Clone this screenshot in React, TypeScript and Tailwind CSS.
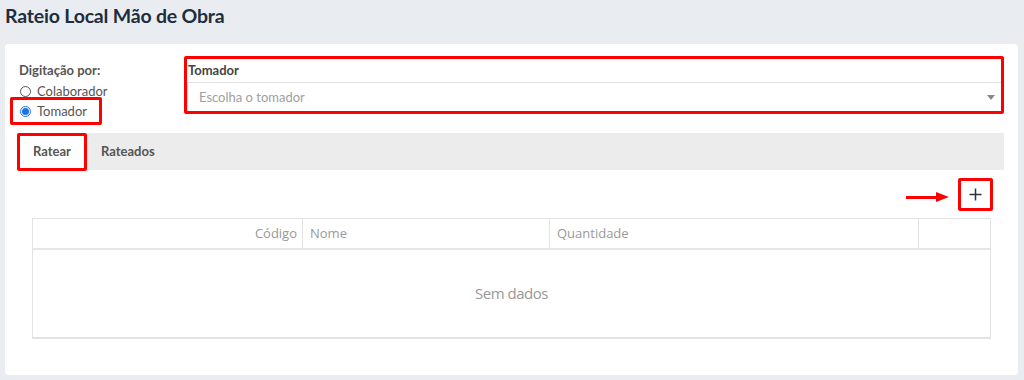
function Radio({ checked, label }: { checked?: boolean; label: string }) {
  return (
    <label className="flex items-center gap-[6px] text-[13px] leading-[16px] text-[#555]">
      {checked ? (
        <span className="w-[11px] h-[11px] rounded-full border border-[#1a73e8] flex items-center justify-center">
          <span className="w-[7px] h-[7px] rounded-full bg-[#1a73e8]" />
        </span>
      ) : (
        <span className="w-[11px] h-[11px] rounded-full border border-[#555] bg-white" />
      )}
      {label}
    </label>
  );
}

function App() {
  return (
    <div className="w-[1024px] h-[380px] bg-[#e9edf2] overflow-hidden font-['Lato','Open_Sans',sans-serif]">
      <h1 className="pl-[5px] pt-[2px] h-[44px] text-[19.5px] leading-[28px] font-bold text-[#1f2d3d] tracking-[-0.2px]">
        Rateio Local Mão de Obra
      </h1>

      <div className="ml-[5px] w-[1013px] h-[331px] bg-white rounded-[4px] pl-[12px] pr-[14px] pt-[12px]">
        <div className="flex">
          <div className="w-[167px] pt-[5px]">
            <div className="pl-[2px] text-[13px] leading-[18px] font-bold text-[#555]">Digitação por:</div>
            <div className="pl-[3px] mt-[4px]">
              <Radio label="Colaborador" />
            </div>
            <div className="-ml-[7px] -mt-[2px] w-[92px] h-[28px] border-[3px] border-[#ff0000] rounded-[2px] pl-[7px] flex items-center">
              <Radio checked label="Tomador" />
            </div>
          </div>

          <div className="flex-1 h-[58px] border-[3px] border-[#ff0000] rounded-[2px] flex flex-col">
            <div className="pl-[1px] pt-[2px] h-[23px] text-[13px] leading-[18px] font-bold text-[#444]">Tomador</div>
            <div className="flex-1 border-t border-l border-[#e2e2e2] flex items-center justify-between pl-[11px] pr-[6px]">
              <span className="text-[13px] text-[#a0a0a0] pt-[1px]">Escolha o tomador</span>
              <span className="w-0 h-0 border-l-[4px] border-r-[4px] border-t-[5px] border-l-transparent border-r-transparent border-t-[#888]" />
            </div>
          </div>
        </div>

        <div className="mt-[8px] h-[37px] bg-[#ececec] flex">
          <div className="w-[70px] h-[38px] bg-white border-[3px] border-[#ff0000] rounded-[2px] flex items-center pl-[13px] text-[13px] font-bold text-[#555]">
            Ratear
          </div>
          <div className="pl-[14px] flex items-center text-[13px] font-bold text-[#555]">Rateados</div>
        </div>

        <div className="flex justify-end items-start h-[48px] pr-[11px] pt-[8px]">
          <div className="flex items-center mr-[9px] mt-[14px]">
            <div className="w-[30px] h-[3px] bg-[#ff0000]" />
            <div className="w-0 h-0 border-t-[5px] border-b-[5px] border-l-[13px] border-t-transparent border-b-transparent border-l-[#ff0000]" />
          </div>
          <div className="w-[35px] h-[33px] border-[3px] border-[#ff0000] rounded-[2px] flex items-center justify-center">
            <svg width="13" height="13" viewBox="0 0 13 13" fill="none" stroke="#333" strokeWidth="1.5">
              <path d="M6.5 0.5v12M0.5 6.5h12" />
            </svg>
          </div>
        </div>

        <div className="ml-[15px] mr-[13px] border border-[#e3e3e3] border-b-[2px] font-['Open_Sans',sans-serif]">
          <div className="flex h-[31px] border-b-[2px] border-[#e6e6e6] text-[13px] text-[#999]">
            <div className="w-[270px] border-r border-[#e3e3e3] flex items-center justify-end pr-[5px]">Código</div>
            <div className="w-[247px] border-r border-[#e3e3e3] flex items-center pl-[7px]">Nome</div>
            <div className="w-[369px] border-r border-[#e3e3e3] flex items-center pl-[7px]">Quantidade</div>
            <div className="flex-1" />
          </div>
          <div className="h-[87px] flex items-center justify-center text-[15px] text-[#999] tracking-[-0.5px]">
            Sem dados
          </div>
        </div>
      </div>
    </div>
  );
}

export default App;
